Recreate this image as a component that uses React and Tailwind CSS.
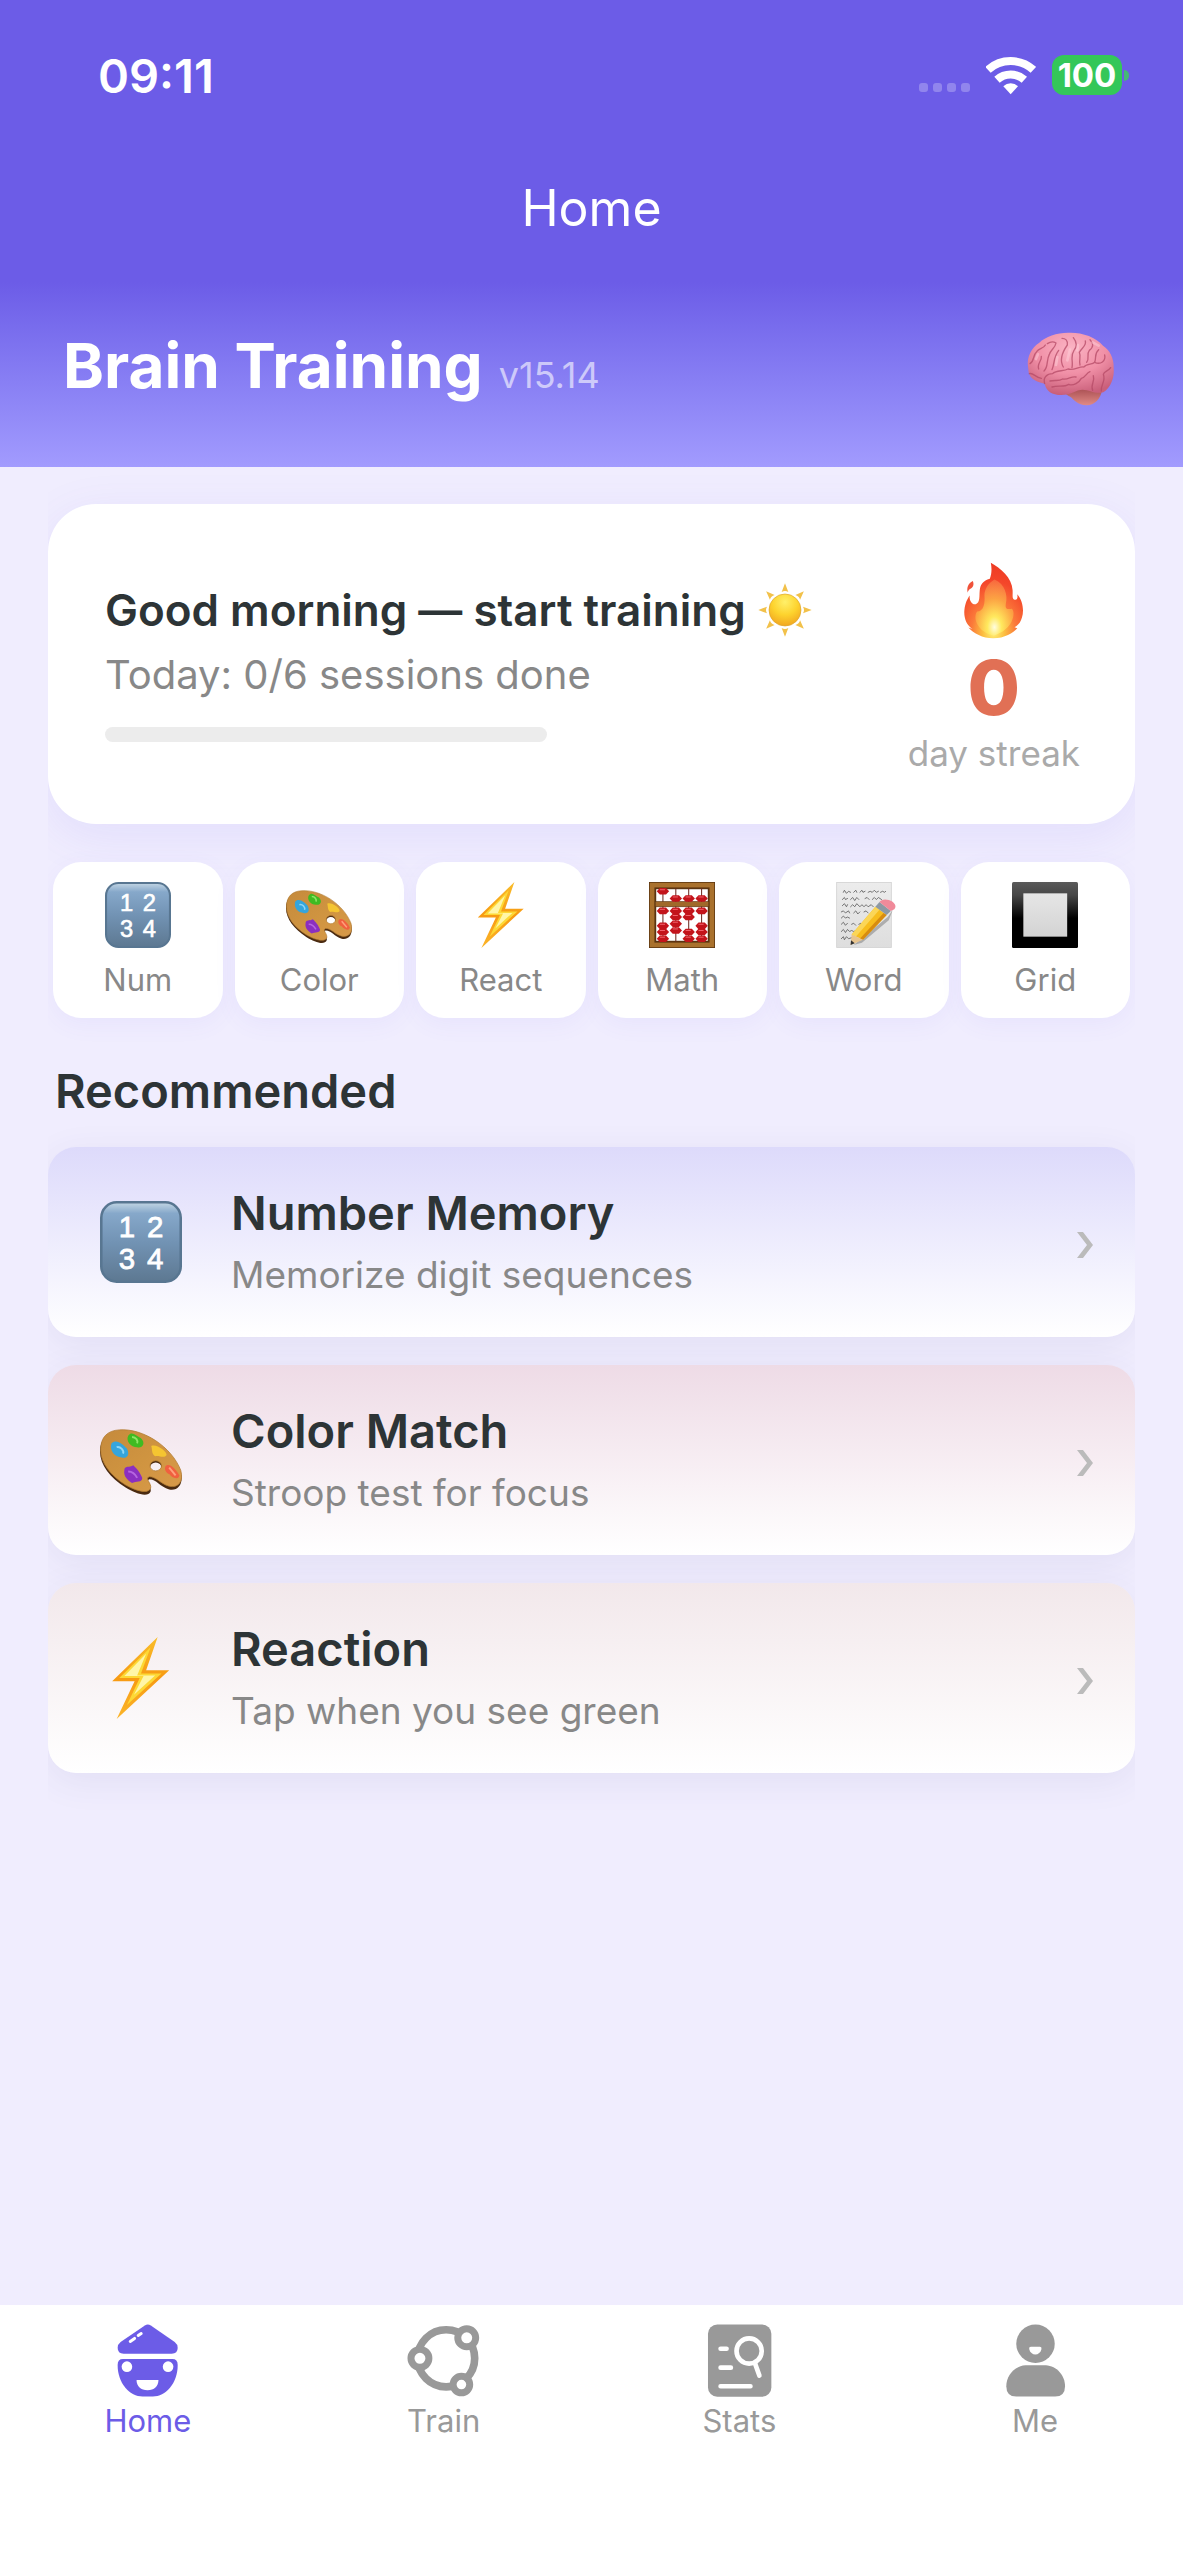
import React from "react";

/* ---------- status bar glyphs ---------- */

function WifiIcon() {
  return (
    <svg viewBox="316 74 150 116" className="h-[39px] w-[50px]" aria-label="Wi-Fi">
      <g fill="none" stroke="#fff" strokeWidth="24">
        <path d="M322 115A101 101 0 0 1 458 115" />
        <path d="M349 145A61 61 0 0 1 431 145" />
      </g>
      <path d="M390 188L368 164A33 33 0 0 1 412 164Z" fill="#fff" />
    </svg>
  );
}

/* ---------- emoji drawings ---------- */

function Brain({ className }) {
  return (
    <svg viewBox="72 62 270 228" className={className} aria-hidden="true">
      <defs>
        <radialGradient id="brainFill" cx="0.5" cy="0.25" r="0.75">
          <stop offset="0" stopColor="#fbb4c4" />
          <stop offset="0.55" stopColor="#f08fa6" />
          <stop offset="1" stopColor="#c95f7a" />
        </radialGradient>
        <linearGradient id="brainStem" x1="0" y1="0" x2="0" y2="1">
          <stop offset="0" stopColor="#a94f52" />
          <stop offset="1" stopColor="#e08a86" />
        </linearGradient>
      </defs>
      <path d="M186 246C204 240 262 226 300 240C296 264 280 285 254 285C226 284 216 268 206 260C198 256 190 252 186 246Z" fill="url(#brainStem)" />
      <path d="M78 168C74 140 88 112 112 97C130 78 168 66 202 67C240 66 282 80 303 106C322 118 336 142 335 172C338 202 326 232 304 246C280 252 262 238 242 238C222 238 206 254 178 254C150 254 132 242 128 220C106 216 84 206 80 186Z" fill="url(#brainFill)" />
      <g fill="none" stroke="#b54a66" strokeWidth="4" strokeLinecap="round" strokeLinejoin="round" opacity="0.75">
        <path d="M128 220C122 200 136 190 152 190C162 178 186 184 198 176C216 182 230 168 246 170C254 158 270 164 278 156" />
        <path d="M82 190C94 186 100 202 118 204" />
        <path d="M84 160C98 152 92 134 104 124C112 112 124 116 130 104" />
        <path d="M110 176C104 160 120 152 118 138" />
        <path d="M126 182C140 170 132 150 142 132C146 118 160 112 162 98C152 92 142 96 136 100" />
        <path d="M150 178C158 160 154 140 170 120" />
        <path d="M184 170C172 150 182 124 196 104C198 90 190 84 180 84" />
        <path d="M210 172C214 152 204 138 216 120C228 106 222 92 214 82" />
        <path d="M234 164C230 148 238 140 232 126C240 112 254 106 250 92" />
        <path d="M254 156C264 146 252 132 262 120C276 110 274 98 264 88" />
        <path d="M278 156C284 140 276 130 290 118" />
        <path d="M278 156C296 164 312 152 308 134" />
        <path d="M144 212C160 208 170 214 182 206C198 210 208 196 222 200" />
        <path d="M150 230C170 224 186 232 200 222C214 228 232 216 238 204C252 200 252 188 264 184" />
        <path d="M272 240C264 224 280 214 274 196" />
        <path d="M298 242C296 222 312 214 304 192C306 182 320 182 326 172" />
      </g>
      <g fill="none" stroke="#ffd0da" strokeWidth="8" strokeLinecap="round" opacity="0.5">
        <path d="M166 140L162 164" />
        <path d="M204 118L196 150" />
        <path d="M272 96L290 106" />
        <path d="M228 104L226 120" />
        <path d="M108 132L102 146" />
      </g>
    </svg>
  );
}

function Sun({ className }) {
  return (
    <svg viewBox="76 104 162 162" className={className} aria-label="sun">
      <defs>
        <radialGradient id="sunFill" cx="0.5" cy="0.25" r="0.8">
          <stop offset="0" stopColor="#fff06a" />
          <stop offset="0.5" stopColor="#fdd32e" />
          <stop offset="1" stopColor="#f0a01e" />
        </radialGradient>
      </defs>
      {[0, 45, 90, 135, 180, 225, 270, 315].map((a) => (
        <path key={a} d="M157 105L167 131Q157 125 147 131Z" fill="#f2c14a" transform={`rotate(${a} 157 185)`} />
      ))}
      <circle cx="157" cy="185" r="48" fill="url(#sunFill)" stroke="#dda52c" strokeWidth="2" />
    </svg>
  );
}

function Fire({ className }) {
  return (
    <svg viewBox="700 38 182 230" className={className} aria-hidden="true">
      <defs>
        <radialGradient id="fireFill" cx="0.5" cy="0.92" r="0.9">
          <stop offset="0" stopColor="#fff27a" />
          <stop offset="0.2" stopColor="#fcc040" />
          <stop offset="0.42" stopColor="#fb7a3a" />
          <stop offset="0.75" stopColor="#f4462a" />
          <stop offset="1" stopColor="#ee3b24" />
        </radialGradient>
        <radialGradient id="fireCore" cx="0.5" cy="0.85" r="0.85">
          <stop offset="0" stopColor="#fffde0" />
          <stop offset="0.22" stopColor="#ffe95e" />
          <stop offset="0.6" stopColor="#fca844" stopOpacity="0.9" />
          <stop offset="1" stopColor="#fb8a50" stopOpacity="0.5" />
        </radialGradient>
      </defs>
      <path d="M783 40C812 56 846 84 848 122C849 136 846 146 852 150C862 154 864 146 862 134C878 152 883 182 876 204C872 218 866 226 854 233L862 236C850 250 824 266 790 266C758 266 732 252 716 234L728 238C710 226 702 204 704 182C706 160 714 146 720 138C718 152 726 166 738 164C752 160 748 140 750 122C752 104 760 94 780 88C786 74 786 56 783 40Z" fill="url(#fireFill)" />
      <path d="M794 90C826 104 834 138 828 162C824 184 838 178 846 178C858 190 850 240 792 258C744 248 728 206 742 186C762 186 766 160 764 138C764 118 776 100 794 90Z" fill="url(#fireCore)" />
      <path d="M729 95C734 106 730 114 722 118C717 121 714 126 714 130C710 114 716 102 729 95Z" fill="#f0523a" />
    </svg>
  );
}

function Numbers({ className }) {
  return (
    <svg viewBox="0 0 64 64" className={className} aria-hidden="true">
      <defs>
        <linearGradient id="keyFill" x1="0" y1="0" x2="0" y2="1">
          <stop offset="0" stopColor="#c3d6e4" />
          <stop offset="0.14" stopColor="#86a8ca" />
          <stop offset="0.5" stopColor="#7293b4" />
          <stop offset="1" stopColor="#5d7891" />
        </linearGradient>
      </defs>
      <rect x="1" y="1" width="62" height="62" rx="12" fill="url(#keyFill)" stroke="#587691" strokeWidth="2" />
      <g fill="#fff" stroke="#fff" strokeWidth="0.6" fontFamily="Liberation Sans, sans-serif" fontSize="23" textAnchor="middle">
        <text x="21" y="28">1</text>
        <text x="43" y="28">2</text>
        <text x="21" y="53">3</text>
        <text x="43" y="53">4</text>
      </g>
    </svg>
  );
}

function Palette({ className }) {
  return (
    <svg viewBox="0 0 64 64" className={className} aria-hidden="true">
      <defs>
        <linearGradient id="woodFill" x1="0" y1="0" x2="1" y2="1">
          <stop offset="0" stopColor="#c58a3c" />
          <stop offset="0.5" stopColor="#cf9440" />
          <stop offset="1" stopColor="#d99a4a" />
        </linearGradient>
      </defs>
      <path fillRule="evenodd" transform="translate(0 1.5)" fill="#4a2a10" d="M15 8.5C34 7 56 22 63 40C65.5 49 61 55 54 53.5C47 51.5 44 45.5 38.5 45.5C34.5 47 40.5 51 39.5 55C37.5 60 28 57 20 52C8 44.5 0 34 0 24C0 14 6 9 15 8.5ZM43.5 32.5A4.5 4 0 1 0 43.5 40.5A4.5 4 0 1 0 43.5 32.5Z" />
      <path fillRule="evenodd" fill="url(#woodFill)" stroke="#b07a30" strokeWidth="0.6" d="M15 8.5C34 7 56 22 63 40C65.5 49 61 54 54 52.5C47 50.5 44 45 38.5 45C34.5 46.5 40.5 50 39.5 54C37.5 59 28 56 20 51.5C8 44 0.5 34 0.5 24C0.5 14 6 9 15 8.5ZM43.5 32.5A4.5 4 0 1 0 43.5 40.5A4.5 4 0 1 0 43.5 32.5Z" />
      <path d="M9 19C13 15 18 20 21 23C24 29 20 31 17 30C12 30 7 25 9 19Z" fill="#35a5dc" />
      <path d="M13 22C16 21 19 25 18 27" stroke="#8ed6f5" strokeWidth="1.5" fill="none" />
      <path d="M22 13C25 9 28 13 32 15C36 19 33 23 29 22C24 22 20 17 22 13Z" fill="#3fbb22" />
      <path d="M25 14C28 14 30 17 29 19" stroke="#8fe668" strokeWidth="1.5" fill="none" />
      <path d="M40 21C44 19 52 25 52 28C50 31 46 28 43 29C40 27 41 24 40 21Z" fill="#f5c531" />
      <path d="M51 37C54 33 60 40 62 44C61 48 56 46 54 43C52 42 50 40 51 37Z" fill="#f0603f" />
      <path d="M54 38L59 44" stroke="#ffa07c" strokeWidth="1.5" />
      <path d="M19 40C19 36 23 38 26 36C29 39 31 41 33 46C33 50 28 48 25 50C22 48 18 45 19 40Z" fill="#8b2fc0" />
      <path d="M22 41C26 41 28 44 29 46" stroke="#b566e0" strokeWidth="1.5" fill="none" />
    </svg>
  );
}

function Bolt({ className }) {
  return (
    <svg viewBox="0 0 64 64" className={className} aria-hidden="true">
      <defs>
        <linearGradient id="boltEdge" x1="0" y1="0" x2="0" y2="1">
          <stop offset="0" stopColor="#f9bd2a" />
          <stop offset="0.5" stopColor="#f79a12" />
          <stop offset="1" stopColor="#fbb52a" />
        </linearGradient>
      </defs>
      <path d="M45 0L9.5 34.5H27L13 64L54 26H36Z" fill="url(#boltEdge)" />
      <path d="M39.5 8L15 32H31L21 53L48 28.5H32Z" fill="#fdd835" />
      <path d="M36 13L19 30.5H34L26.5 45L43 30H29Z" fill="#fff6a8" />
    </svg>
  );
}

const RODS = [
  { x: 13.5, beads: [9, 28, 42.5, 48.5, 55] },
  { x: 26, beads: [16, 28, 34, 40.5, 47] },
  { x: 38.5, beads: [16, 28, 34, 48.5, 55] },
  { x: 51, beads: [16, 28, 42.5, 48.5, 55] },
];

function Abacus({ className }) {
  return (
    <svg viewBox="0 0 64 64" className={className} aria-hidden="true">
      <rect x="3.5" y="3.5" width="57" height="57" fill="none" stroke="#5b3410" strokeWidth="7" />
      <rect x="3" y="3" width="58" height="58" fill="none" stroke="#a9712d" strokeWidth="4.5" />
      {RODS.map((rod) => (
        <path key={rod.x} d={`M${rod.x} 6V58`} stroke="#6d2a20" strokeWidth="1" />
      ))}
      <rect x="6" y="19" width="52" height="5" fill="#a0692a" stroke="#5b3410" strokeWidth="0.6" />
      {RODS.map((rod) =>
        rod.beads.map((y) => (
          <g key={`${rod.x}-${y}`}>
            <path d={`M${rod.x - 6} ${y}L${rod.x - 3} ${y - 3.2}H${rod.x + 3}L${rod.x + 6} ${y}L${rod.x + 3} ${y + 3.2}H${rod.x - 3}Z`} fill="#c3141b" />
            <path d={`M${rod.x - 3} ${y - 1.5}H${rod.x + 2}`} stroke="#f0616a" strokeWidth="1" />
          </g>
        ))
      )}
    </svg>
  );
}

function Memo({ className }) {
  return (
    <svg viewBox="0 0 64 64" className={className} aria-hidden="true">
      <defs>
        <linearGradient id="paperFill" x1="0" y1="0" x2="0" y2="1">
          <stop offset="0" stopColor="#ececec" />
          <stop offset="1" stopColor="#dedede" />
        </linearGradient>
      </defs>
      <rect x="5.5" y="0.5" width="53" height="63" fill="url(#paperFill)" stroke="#d2d2d2" strokeWidth="0.8" />
      <g fill="none" stroke="#5c5c5c" strokeWidth="0.8" strokeLinecap="round" strokeLinejoin="round">
        <path d="M12 10L13 8L15 11L17 9L19 10M22 10L24 8L25 10M28 10L30 8L31 10L33 9M36 10L38 9L40 10L42 8L44 10L46 9M48 10L50 9L52 10L53 9" />
        <path d="M11 17L13 15L14 17L16 16M19 17L21 15L23 18L25 15L27 17M33 16L35 15L37 17M40 17L42 15L44 17L46 15L49 17" />
        <path d="M11 23L13 21L15 24L16 22M19 24L21 22L23 24L25 21L28 24L30 22L32 24L34 22L36 24L39 22L41 24" />
        <path d="M10 29L12 28L14 30L17 28L18 30M22 30L24 28L26 31L28 29M32 29L34 28L36 30" />
        <path d="M10 35L12 33L14 35L16 34L18 35" />
        <path d="M10 41L12 39L14 42L16 40M20 41L22 40L24 42M27 41L29 40L31 41" />
        <path d="M10 48L12 46L14 49L16 46L18 48L20 47L22 48L25 47" />
        <path d="M10 55L12 53L13 56L15 53L17 55L20 54" />
      </g>
      <path d="M22 61L55 34L60 27L56 37L30 59Z" fill="#777" opacity="0.5" />
      <path d="M20 51L43 24L54 32L31 56Z" fill="#f7bd1d" />
      <path d="M20 51L43 24L47 27L24 53Z" fill="#fbd657" />
      <path d="M28 55L51 30L54 32L31 56Z" fill="#d78c10" />
      <path d="M20 51L31 56L19 61Z" fill="#e8c48d" />
      <path d="M19.400 56.500L23 59.500L19 61Z" fill="#333" />
      <path d="M43 24L47 19.500L58 28L54 32Z" fill="#8d99a3" />
      <path d="M47 19.500C50 14 63 18 62.500 24C62 27 60 27 58 28Z" fill="#f08a9a" />
    </svg>
  );
}

function SquareButton({ className }) {
  return (
    <svg viewBox="0 0 64 64" className={className} aria-hidden="true">
      <defs>
        <linearGradient id="frameFill" x1="0" y1="0" x2="0" y2="1">
          <stop offset="0" stopColor="#5a5a5a" />
          <stop offset="0.2" stopColor="#474747" />
          <stop offset="0.55" stopColor="#000" />
        </linearGradient>
        <linearGradient id="frameInner" x1="0" y1="0" x2="0" y2="1">
          <stop offset="0" stopColor="#e6e6e6" />
          <stop offset="1" stopColor="#d3d3d3" />
        </linearGradient>
      </defs>
      <rect width="64" height="64" rx="1.5" fill="url(#frameFill)" />
      <rect x="11" y="11" width="42.5" height="42" fill="url(#frameInner)" />
    </svg>
  );
}

/* ---------- tab bar icons ---------- */

function HomeIcon({ className }) {
  return (
    <svg viewBox="154 103 220 219" className={className} aria-hidden="true">
      <path d="M256 107Q265 101 274 107L346 157Q355 164 355 174Q355 192 337 192H192Q174 192 174 174Q174 164 183 157Z" fill="#6c5ce7" />
      <path d="M190 208H339Q355 208 355 226C355 282 318 321 280 321H249C211 321 174 282 174 226Q174 208 190 208Z" fill="#6c5ce7" />
      <circle cx="202" cy="231" r="16" fill="#fff" />
      <circle cx="326" cy="231" r="16" fill="#fff" />
      <path d="M231 271H297C297 290 284 302 264 302C244 302 231 290 231 271Z" fill="#fff" />
      <path d="M212 155L225 146M236 137L245 131" stroke="#fff" strokeWidth="9" strokeLinecap="round" />
    </svg>
  );
}

function TrainIcon({ className }) {
  return (
    <svg viewBox="1042 104 220 219" className={className} aria-hidden="true">
      <g stroke="#999" strokeWidth="21" fill="#fff">
        <circle cx="1160" cy="207" r="86" fill="none" strokeWidth="23" />
        <circle cx="1081" cy="207" r="27" />
        <circle cx="1222" cy="145" r="27" />
        <circle cx="1206" cy="286" r="25" />
      </g>
    </svg>
  );
}

function StatsIcon({ className }) {
  return (
    <svg viewBox="128 103 220 219" className={className} aria-hidden="true">
      <rect x="143" y="104" width="191" height="218" rx="28" fill="#999" />
      <g fill="none" stroke="#fff" strokeWidth="14" strokeLinecap="round">
        <path d="M181 177H199M181 234H212M181 290H271" />
        <circle cx="267" cy="184" r="38" />
        <path d="M285 222L298 258" />
      </g>
    </svg>
  );
}

function MeIcon({ className }) {
  return (
    <svg viewBox="1016 103 220 219" className={className} aria-hidden="true">
      <circle cx="1126" cy="162" r="58" fill="#999" />
      <path d="M1096 227H1157C1190 229 1215 258 1215 290Q1215 321 1185 321H1068Q1038 321 1038 290C1038 258 1063 229 1096 227Z" fill="#999" />
      <path d="M1112 171H1139Q1145 171 1144 178C1140 200 1111 200 1107 178Q1106 171 1112 171Z" fill="#fff" />
    </svg>
  );
}

/* ---------- content ---------- */

const TILES = [
  { label: "Num", Icon: Numbers },
  { label: "Color", Icon: Palette },
  { label: "React", Icon: Bolt },
  { label: "Math", Icon: Abacus },
  { label: "Word", Icon: Memo },
  { label: "Grid", Icon: SquareButton },
];

const RECOMMENDED = [
  { title: "Number Memory", text: "Memorize digit sequences", Icon: Numbers, tint: "from-[#dddafb]" },
  { title: "Color Match", text: "Stroop test for focus", Icon: Palette, tint: "from-[#eedbe6]" },
  { title: "Reaction", text: "Tap when you see green", Icon: Bolt, tint: "from-[#f2e8eb]" },
];

const TABS = [
  { label: "Home", Icon: HomeIcon, active: true },
  { label: "Train", Icon: TrainIcon },
  { label: "Stats", Icon: StatsIcon },
  { label: "Me", Icon: MeIcon },
];

export default function App() {
  return (
    <div className="flex min-h-screen flex-col bg-[#f0edfe] font-['Inter',sans-serif] text-[#2d3436]">
      <header className="bg-[#6c5ce7] text-white">
        <div className="flex h-[150px] items-center justify-between pr-[54px] pl-[98px]">
          <span className="text-[47px] leading-none font-semibold">09:11</span>
          <div className="flex items-center">
            <div className="mt-6 mr-4 flex gap-[5px]">
              {[0, 1, 2, 3].map((i) => (
                <span key={i} className="size-[9px] rounded-[3px] bg-white/25" />
              ))}
            </div>
            <WifiIcon />
            <span className="ml-4 flex h-10 w-[70px] items-center justify-center rounded-xl bg-[#34c759] text-[33px] leading-none font-bold">
              100
            </span>
            <span className="ml-0.5 h-[11px] w-[5px] rounded-r-full bg-[#46b878]" />
          </div>
        </div>
        <div className="flex h-[116px] items-center justify-center text-[50px] leading-none">Home</div>
        <div className="flex h-[201px] items-center justify-between bg-linear-to-b from-[#6c5ce7] from-8% to-[#a29bfe] pt-1 pr-[67px] pl-[63px]">
          <div className="flex items-baseline gap-4">
            <h1 className="text-[62px] leading-none font-bold">Brain Training</h1>
            <span className="text-[36px] text-white/60">v15.14</span>
          </div>
          <Brain className="h-[76px] w-[90px]" />
        </div>
      </header>

      <main className="mx-12 flex-1 overflow-hidden pt-[37px] pb-10">
        <section className="flex items-center justify-between rounded-[48px] bg-white pt-[58px] pr-[55px] pb-[49px] pl-[57px] shadow-[0_12px_48px_rgba(108,92,231,0.1)]">
          <div className="mt-4 self-start">
            <h2 className="flex items-center gap-3 text-[44px] leading-[64px] font-semibold">
              Good morning — start training
              <Sun className="size-[54px]" />
            </h2>
            <p className="mt-[5px] text-[40px] leading-[56px] text-[#888]">Today: 0/6 sessions done</p>
            <div
              role="progressbar"
              aria-label="Sessions done"
              aria-valuemin={0}
              aria-valuemax={6}
              aria-valuenow={0}
              className="mt-6 h-[15px] w-[442px] rounded-full bg-[#ececec]"
            />
          </div>
          <div className="flex flex-col items-center">
            <Fire className="h-[77px] w-[61px]" />
            <span className="mt-2 text-[76px] leading-[80px] font-extrabold text-[#e17055]">0</span>
            <span className="mt-1 text-[35px] leading-[44px] text-[#aaa]">day streak</span>
          </div>
        </section>

        <section className="mx-[5px] mt-[38px] grid grid-cols-6 gap-3">
          {TILES.map(({ label, Icon }) => (
            <button
              key={label}
              type="button"
              className="flex flex-col items-center rounded-[28px] bg-white pt-5 pb-5 shadow-[0_6px_24px_rgba(108,92,231,0.06)]"
            >
              <Icon className="size-[66px]" />
              <span className="mt-3.5 text-[31px] leading-9 text-[#888]">{label}</span>
            </button>
          ))}
        </section>

        <h2 className="mt-[45px] mb-7 ml-[7px] text-[47px] leading-[56px] font-semibold">Recommended</h2>

        <section className="flex flex-col gap-7">
          {RECOMMENDED.map(({ title, text, Icon, tint }) => (
            <button
              key={title}
              type="button"
              className={`flex items-center rounded-[28px] bg-linear-to-b ${tint} to-white py-9 pr-[42px] pl-[52px] text-left shadow-[0_8px_36px_rgba(70,60,130,0.08)]`}
            >
              <Icon className="size-[82px]" />
              <span className="ml-[49px] flex flex-1 flex-col gap-1.5">
                <span className="text-[47px] leading-[60px] font-semibold">{title}</span>
                <span className="text-[37px] leading-[52px] text-[#888]">{text}</span>
              </span>
              <svg viewBox="0 0 16 28" className="mt-1.5 h-7 w-4 shrink-0" aria-hidden="true">
                <path d="M0 1H6L16 14L6 27H0L10 14Z" fill="#bbb" />
              </svg>
            </button>
          ))}
        </section>
      </main>

      <nav className="grid grid-cols-4 bg-white pt-[19px] pb-[121px]">
        {TABS.map(({ label, Icon, active }) => (
          <a
            key={label}
            href={`#${label.toLowerCase()}`}
            aria-current={active ? "page" : undefined}
            className={active ? "flex flex-col items-center text-[#6c5ce7]" : "flex flex-col items-center text-[#999]"}
          >
            <Icon className="size-[73px]" />
            <span className="mt-1.5 text-[31px] leading-9">{label}</span>
          </a>
        ))}
      </nav>
    </div>
  );
}
